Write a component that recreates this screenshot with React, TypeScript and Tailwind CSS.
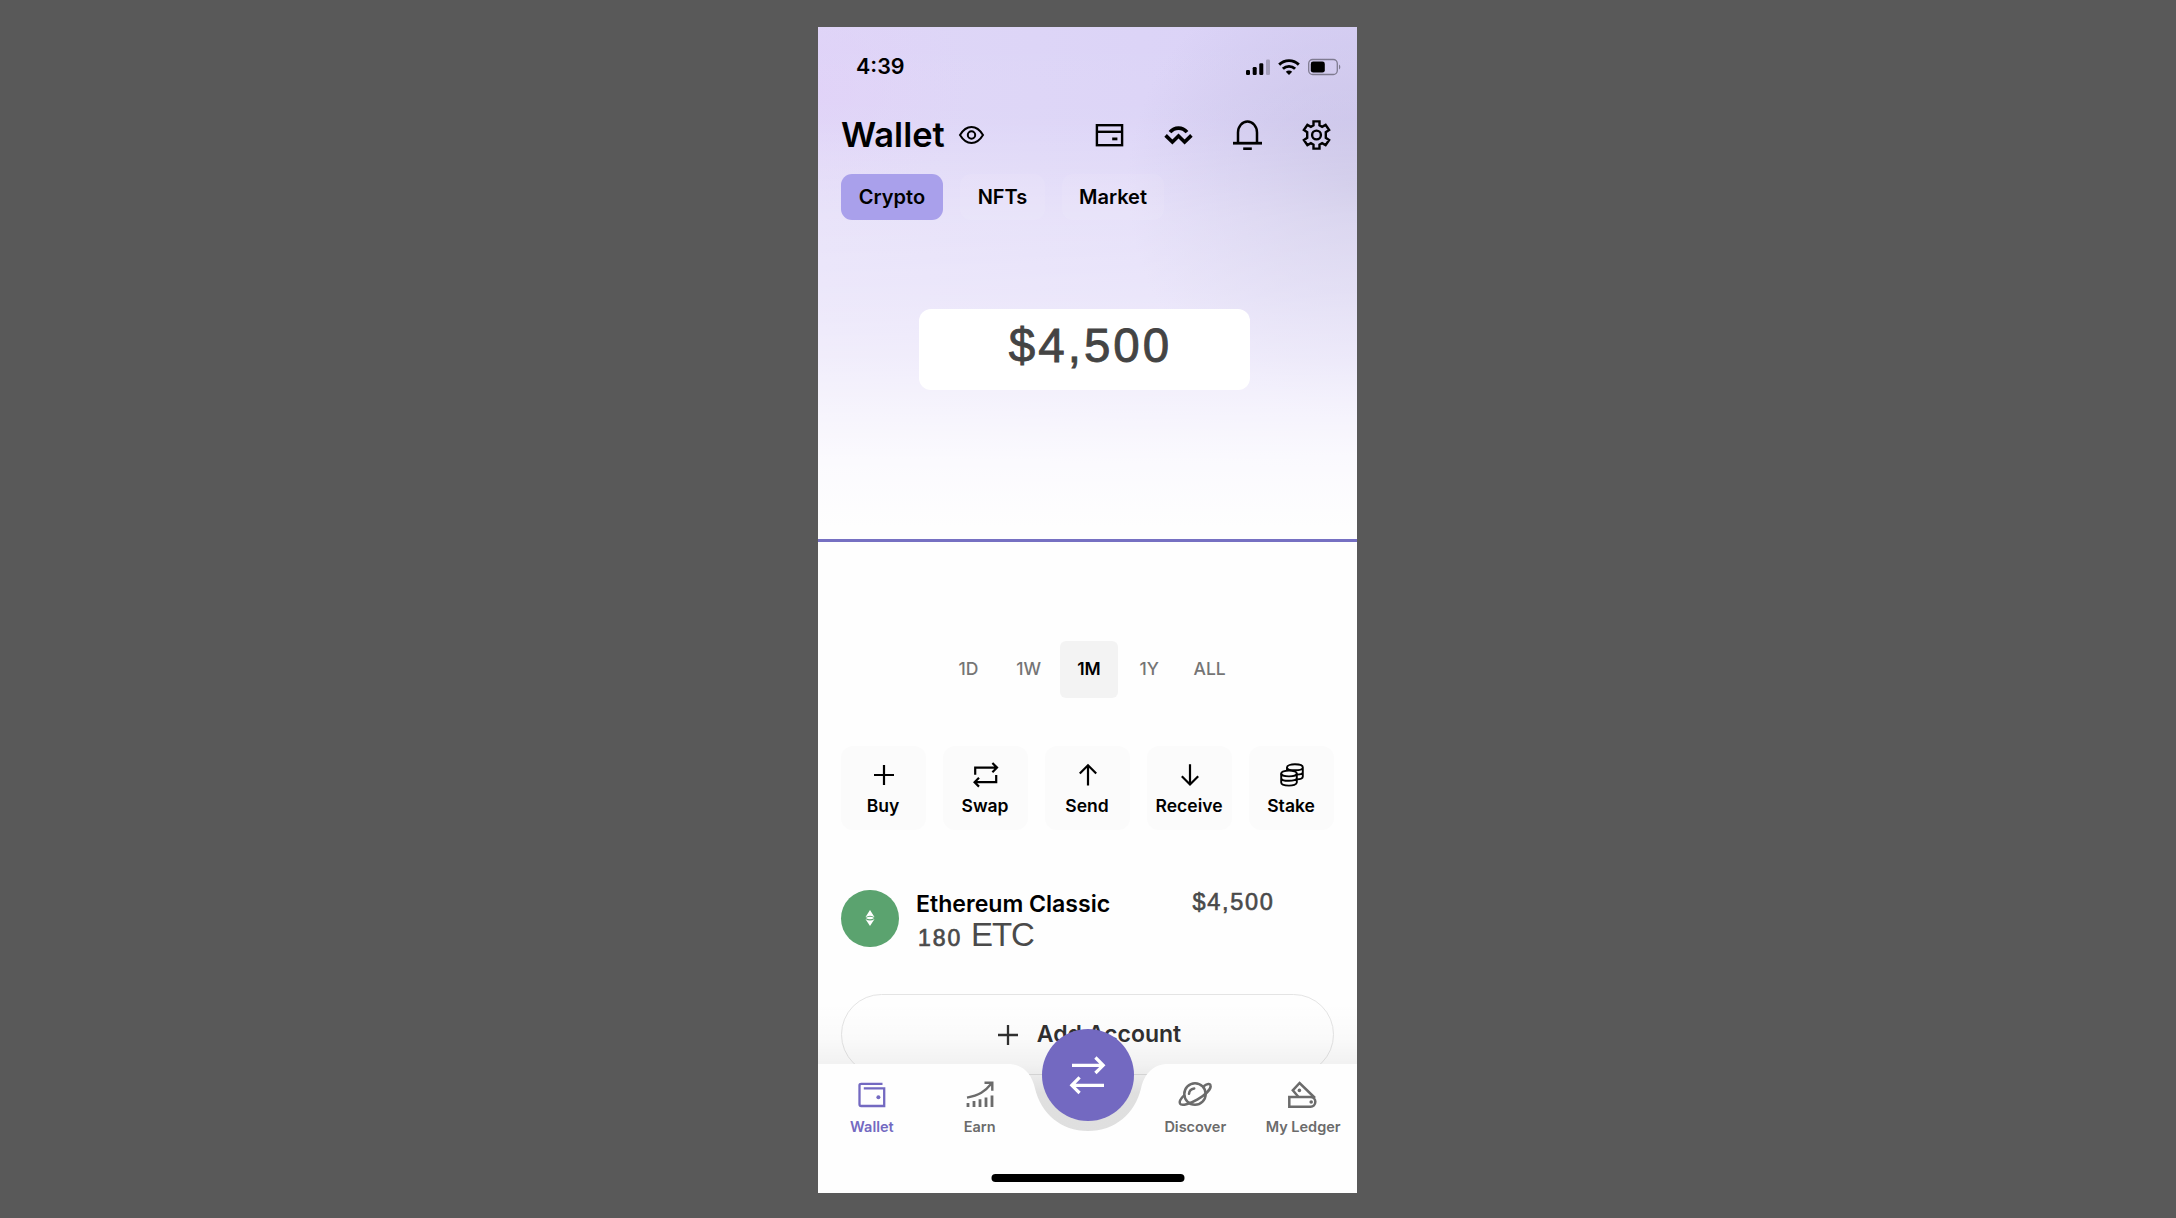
import type { ReactNode } from "react";

type BoxProps = { w: number; h: number; sw?: number; className?: string; children: ReactNode };

function Icon({ w, h, sw = 2, className = "", children }: BoxProps) {
  return (
    <svg
      width={w}
      height={h}
      viewBox={`0 0 ${w} ${h}`}
      fill="none"
      stroke="currentColor"
      strokeWidth={sw}
      className={`shrink-0 overflow-visible ${className}`}
    >
      {children}
    </svg>
  );
}

function StatusBar() {
  return (
    <div className="flex h-[78px] items-center justify-between pl-[38px] pr-[16px] pt-px">
      <span className="text-[21.5px] font-semibold leading-none">4:39</span>
      <div className="flex items-center gap-[8px]">
        <Icon w={24} h={16}>
          <g fill="currentColor" stroke="none">
            <rect x="0" y="11" width="4" height="5" rx="1.2" />
            <rect x="6.7" y="8" width="4" height="8" rx="1.2" />
            <rect x="13.3" y="4.2" width="4" height="11.8" rx="1.2" />
            <rect x="20" y="0.5" width="4" height="15.5" rx="1.2" opacity="0.22" />
          </g>
        </Icon>
        <Icon w={22} h={16} sw={2.9}>
          <path d="M1.2 5.6C6.8 .3 15.2 .3 20.8 5.6" />
          <path d="M4.9 9.8C8.4 6.5 13.6 6.5 17.1 9.8" />
          <path d="M7.8 12.8C9.6 11.2 12.4 11.2 14.2 12.8L11 16Z" fill="currentColor" stroke="none" />
        </Icon>
        <Icon w={33} h={16} sw={1.3}>
          <rect x="0.7" y="0.5" width="28.6" height="15" rx="4" opacity="0.4" />
          <rect x="2.8" y="2.6" width="14" height="11" rx="2.4" fill="currentColor" stroke="none" />
          <path d="M31 5.5C32.8 6.4 32.8 9.6 31 10.5Z" fill="currentColor" stroke="none" opacity="0.4" />
        </Icon>
      </div>
    </div>
  );
}

function TitleRow() {
  return (
    <div className="flex h-[60px] items-center pl-[23px] pr-[26px]">
      <h1 className="w-[118px] pt-px text-[34.5px] font-semibold leading-none">Wallet</h1>
      <Icon w={25} h={18} sw={2}>
        <path d="M1 9C4 4 8 1 12.5 1S21 4 24 9C21 14 17 17 12.5 17S4 14 1 9Z" />
        <circle cx="12.5" cy="9" r="3.7" />
      </Icon>
      <div className="ml-auto flex items-center gap-[40px]">
        <Icon w={29} h={30} sw={2.4}>
          <rect x="1.9" y="5.2" width="25.2" height="20" />
          <path d="M2 11.8H27" />
          <path d="M17.2 18.9H22.4" strokeWidth="2.8" />
        </Icon>
        <Icon w={29} h={30} sw={3.6}>
          <path d="M6 12.2C10.5 6.8 18.5 6.8 23 12.2" />
          <path d="M1.6 15.4L8.4 22L14.5 16L20.6 22L27.4 15.4" />
        </Icon>
        <Icon w={29} h={30} sw={2.5}>
          <path d="M5 22.5V12.5A9.5 11 0 0 1 24 12.5V22.5" />
          <path d="M0 23.2H29" strokeWidth="2.8" />
          <path d="M10.2 28.7H18.8" strokeWidth="2.6" />
        </Icon>
        <Icon w={29} h={30} sw={2.4}>
          <path d="M11.5 1.4H17.5V5.4L20.1 6.8L23.6 4.9L27.1 10L23.8 12.2V17.8L27.1 20L23.6 25.1L20.1 23.2L17.5 24.6V28.6H11.5V24.6L8.9 23.2L5.4 25.1L1.9 20L5.2 17.8V12.2L1.9 10L5.4 4.9L8.9 6.8L11.5 5.4Z" />
          <circle cx="14.5" cy="15" r="4.4" />
        </Icon>
      </div>
    </div>
  );
}

function Tabs() {
  return (
    <div className="mt-[8.5px] flex h-[46px] gap-[17px] pl-[23px] text-[20px] font-semibold">
      <div className="flex w-[102px] items-center justify-center rounded-[11px] bg-[#a9a0eb]">Crypto</div>
      <div className="flex w-[85px] items-center justify-center rounded-[11px] bg-white/8">NFTs</div>
      <div className="flex w-[102px] items-center justify-center rounded-[11px] bg-white/8">Market</div>
    </div>
  );
}

function Ranges() {
  return (
    <div className="mt-[99px] flex h-[57px] justify-center gap-[2.3px] pl-[3px] text-[17.5px] font-medium text-[#757575]">
      {["1D", "1W", "1M", "1Y", "ALL"].map((r) => (
        <div
          key={r}
          className={
            r === "1M"
              ? "flex w-[58px] items-center justify-center rounded-[6px] bg-[#f3f3f3] pt-px font-semibold text-black"
              : "flex w-[58px] items-center justify-center pt-px"
          }
        >
          {r}
        </div>
      ))}
    </div>
  );
}

const actions: { label: string; icon: ReactNode }[] = [
  { label: "Buy", icon: <path d="M12 2V22M2 12H22" /> },
  {
    label: "Swap",
    icon: (
      <>
        <path d="M1.2 11.7V4.6H22.5M18.4 0L23 4.6L18.4 9.2" />
        <path d="M22.2 12V19.2H1M5 14.8L.6 19.2L5 23.6" />
      </>
    ),
  },
  { label: "Send", icon: <path d="M12 22.5V2.5M3.8 10.5L12 2.3L20.2 10.5" /> },
  { label: "Receive", icon: <path d="M12 1.3V21.3M3.8 13.3L12 21.5L20.2 13.3" /> },
  {
    label: "Stake",
    icon: (
      <g strokeWidth="1.9">
        <ellipse cx="9" cy="10.5" rx="7.8" ry="2.9" />
        <path d="M1.2 10.5V19.6C1.2 23.6 16.8 23.6 16.8 19.6V10.5M1.2 14.9C1.2 18.8 16.8 18.8 16.8 14.9" />
        <path d="M7 7.6V4.3C7 .3 22.8 .3 22.8 4.3V13.4C22.8 15 20 16.3 16.8 16.4M7 4.4C7 8.2 22.8 8.2 22.8 4.4M16.8 11.6C20 11.5 22.8 10.4 22.8 8.9" />
      </g>
    ),
  },
];

function Actions() {
  return (
    <div className="mt-[48.5px] flex gap-[17.5px] pl-[23.3px]">
      {actions.map((a) => (
        <div key={a.label} className="flex h-[84px] w-[84.5px] flex-col items-center rounded-[12px] bg-[#fbfbfb] pt-[17px]">
          <Icon w={24} h={24} sw={2.2}>
            {a.icon}
          </Icon>
          <span className="mt-[9px] pr-px text-[17.5px] font-semibold leading-[20px]">{a.label}</span>
        </div>
      ))}
    </div>
  );
}

function Asset() {
  return (
    <div className="mt-[58.5px] flex h-[60px] items-start pl-[23px]">
      <div className="mt-px flex size-[57.5px] items-center justify-center rounded-full bg-[#5ba36f]">
        <svg width="10" height="16" viewBox="0 0 10 16" fill="white">
          <path d="M5 0L9.6 7.2Q5 4.2 .4 7.2Z" />
          <path d="M.8 8Q5 5.4 9.2 8Q5 10.6 .8 8Z" />
          <path d="M.4 9Q5 12 9.6 9L5 16Z" />
        </svg>
      </div>
      <div className="ml-[17.5px] w-[275.5px]">
        <div className="mt-[1px] text-[23.1px] font-semibold leading-[28px]">Ethereum Classic</div>
        <div className="ml-[2px] mt-px flex h-[32px] items-baseline font-['Liberation_Sans',sans-serif] text-[#4a4a4a]">
          <span className="text-[23px] leading-[32px] tracking-[2px] [-webkit-text-stroke:0.7px_#4a4a4a]">180</span>
          <span className="ml-[8.5px] text-[33px] leading-[32px] tracking-[-1px]">ETC</span>
        </div>
      </div>
      <div className="ml-px font-['Liberation_Sans',sans-serif] text-[23.5px] leading-[26px] tracking-[1.7px] text-[#4a4a4a] [-webkit-text-stroke:0.6px_#4a4a4a]">
        $4,500
      </div>
    </div>
  );
}

function AddAccount() {
  return (
    <div className="ml-[23px] mt-[45.5px] flex h-[81px] w-[493px] shrink-0 items-center justify-center rounded-full border-[1.5px] border-[#e4e4e4] pl-[4px]">
      <Icon w={20} h={20} sw={2.3} className="text-[#303030]">
        <path d="M10 0V20M0 10H20" />
      </Icon>
      <span className="ml-[19px] text-[23px] font-semibold leading-none text-[#303030]">Add Account</span>
    </div>
  );
}

const navItems: { label: string; icon: ReactNode }[] = [
  {
    label: "Wallet",
    icon: (
      <Icon w={30} h={28} sw={2.3}>
        <path d="M25.5 3.9H4.2Q2.5 3.9 2.5 5.2V24.2Q2.5 26 4.2 26H27.2V8.4H6.8" />
        <circle cx="21.4" cy="17.2" r="2" fill="currentColor" stroke="none" />
      </Icon>
    ),
  },
  {
    label: "Earn",
    icon: (
      <Icon w={30} h={28} sw={2.8}>
        <path d="M2 17.6C14 15.5 20 11.5 26.5 3.5M19.5 2.8H27.3V10.8" strokeWidth="2.4" />
        <path d="M3 23V27M9 21V27M15 19.2V27M21 17.6V27M27 15.5V27" />
      </Icon>
    ),
  },
  { label: "", icon: null },
  {
    label: "Discover",
    icon: (
      <Icon w={32} h={28} sw={2.5}>
        <circle cx="16" cy="14" r="10.7" />
        <path d="M24.6 6.2C28.3 3.6 31.3 3.2 31.6 5.4C32.2 9 26.2 14.8 18.6 19.3C10.6 24 2.6 26.2 1 23.6C-.2 21.6 1.8 18.4 5.6 14.8" />
        <path d="M10 13.8C10.3 10.9 12.3 8.8 15.2 8.4" strokeLinecap="round" />
      </Icon>
    ),
  },
  {
    label: "My Ledger",
    icon: (
      <Icon w={30} h={28} sw={2.5}>
        <path d="M1.3 17H22.5A4.8 4.8 0 0 1 22.5 26.7H1.3Z" />
        <path d="M10.3 16.8L4.8 10.4L11.6 3L27 18" />
        <circle cx="11.4" cy="10.4" r="1.8" fill="currentColor" stroke="none" />
        <circle cx="23.2" cy="22" r="1.8" fill="currentColor" stroke="none" />
      </Icon>
    ),
  },
];

function BottomNav() {
  return (
    <nav className="absolute inset-x-0 bottom-0 h-[190px]">
      <div className="absolute inset-x-0 top-0 h-[145px] bg-[linear-gradient(to_bottom,rgba(0,0,0,0)_0px,rgba(0,0,0,0.015)_35px,rgba(0,0,0,0.05)_62px,rgba(0,0,0,0.12)_90px,rgba(0,0,0,0.12)_145px)]" />
      <svg className="absolute bottom-0 left-0" width="539" height="130" viewBox="0 0 539 130">
        <path
          fill="#fefefe"
          d="M0 1H190C205 1 214 11.500 217 25.500C223 50.500 243 68 270 68S317 50.500 323 25.500C326 11.500 335 1 350 1H539V130H0Z"
        />
      </svg>
      <div className="absolute left-1/2 top-[26px] flex size-[92px] -translate-x-1/2 items-center justify-center rounded-full bg-[#7369c1] text-white">
        <Icon w={36} h={36} sw={3.2}>
          <path d="M2 8.3H33M25.4 .5L33.2 8.3L25.4 16" />
          <path d="M34 28.3H3M9.6 20.4L1.8 28.3L9.6 36" />
        </Icon>
      </div>
      <div className="absolute inset-x-0 top-[77px] grid grid-cols-5 text-[14.5px] font-semibold text-[#6b6b6b]">
        {navItems.map((n, i) => (
          <div key={i} className={i === 0 ? "flex flex-col items-center text-[#7369c1]" : "flex flex-col items-center"}>
            {n.icon}
            <span className="mt-[9px] whitespace-nowrap leading-[20px]">{n.label}</span>
          </div>
        ))}
      </div>
      <div className="absolute bottom-[11px] left-1/2 h-[8px] w-[193px] -translate-x-1/2 rounded-full bg-black" />
    </nav>
  );
}

export default function App() {
  return (
    <div className="h-[1218px] w-[2176px] overflow-hidden bg-[#595959] pl-[818px] pt-[27px] font-['Inter',sans-serif] text-black">
      <main className="relative flex h-[1166px] w-[539px] flex-col overflow-hidden bg-[#fefefe]">
        <header className="flex h-[512px] shrink-0 flex-col bg-[linear-gradient(to_bottom,rgba(255,255,255,0)_0px,rgba(255,255,255,0.04)_90px,rgba(255,255,255,0.31)_190px,rgba(255,255,255,0.42)_265px,rgba(255,255,255,0.56)_330px,rgba(255,255,255,0.73)_383px,rgba(255,255,255,0.88)_433px,#fefefe_500px),radial-gradient(circle_at_100%_160px,#c8c2e6_0px,rgba(200,194,230,0)_230px),radial-gradient(ellipse_at_0%_60px,rgba(224,208,248,0.7)_0px,rgba(224,208,248,0)_150px),linear-gradient(to_right,#dfd7f7,#dad2f7)]">
          <StatusBar />
          <TitleRow />
          <Tabs />
          <div className="ml-[101px] mt-[89.5px] flex h-[81px] w-[331px] shrink-0">
            <div className="flex h-[81px] w-[331px] items-start justify-center rounded-[12px] bg-white pl-[12px] pt-[10px] font-['Liberation_Sans',sans-serif] text-[47.5px] leading-[54px] tracking-[3px] text-[#444] [-webkit-text-stroke:0.9px_#444]">
              $4,500
            </div>
          </div>
        </header>
        <div className="h-[2.5px] shrink-0 bg-[#7670c2]" />
        <Ranges />
        <Actions />
        <Asset />
        <AddAccount />
        <BottomNav />
      </main>
    </div>
  );
}
